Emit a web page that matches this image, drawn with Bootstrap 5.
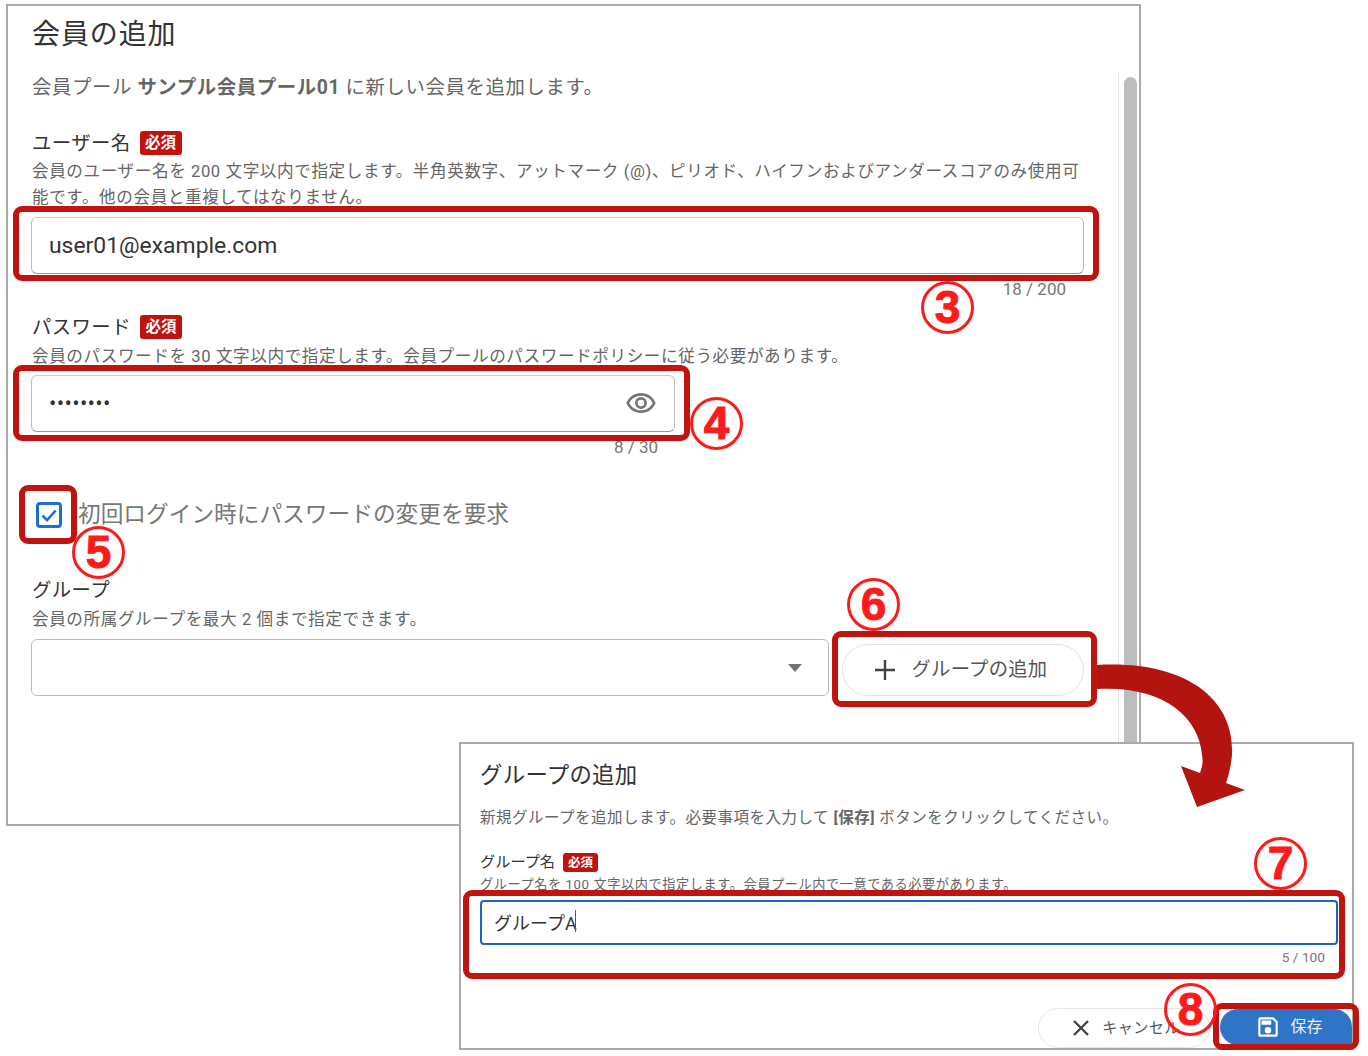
<!DOCTYPE html>
<html lang="ja">
<head>
<meta charset="utf-8">
<title>会員の追加</title>
<link href="https://cdn.jsdelivr.net/npm/bootstrap@5.3.0/dist/css/bootstrap.min.css" rel="stylesheet">
<style>
html,body{height:100%;}
body{margin:0;background:#fff;font-family:Roboto,"Noto Sans CJK JP",sans-serif;color:#666;overflow:hidden;}
.canvas{position:relative;width:1368px;height:1056px;overflow:hidden;}
.win{position:absolute;background:#fff;border:2px solid #aaa;overflow:hidden;}
.win-a{left:6px;top:4px;width:1135px;height:822px;padding:0 54px 0 24px;}
.win-b{left:459px;top:742px;width:895px;height:308px;padding:0 14px 0 19px;}
.scroll-track{position:absolute;left:1110px;top:66px;bottom:0;width:23px;background:#fff;border-left:1px solid #e2e2e2;}
.scroll-thumb{position:absolute;left:5px;top:5px;bottom:0;width:13px;background:#bdbdbd;border-radius:7px 7px 0 0;}
.title-a{margin:10px 0 0;height:38px;line-height:38px;font-size:28px;font-weight:400;color:#333;letter-spacing:.9px;}
.intro{margin:20px 0 0;height:28px;line-height:28px;font-size:19.4px;letter-spacing:.6px;}
.intro b,.intro-b b{font-weight:700;color:#666;}
.lbl{display:flex;align-items:center;gap:9px;height:26px;color:#333;font-size:19.4px;line-height:26px;letter-spacing:.4px;}
.lbl-first{margin-top:29px;}
.req{background:#c1120e;color:#fff;font-size:15.5px;font-weight:700;border-radius:3px;padding:0 5.5px;height:24px;line-height:24px;letter-spacing:0;margin-bottom:2px;}
.hint{font-size:16.6px;line-height:26px;margin:0;letter-spacing:.59px;}
.field{display:block;width:100%;height:57px;border:1px solid #bbb;border-bottom-color:#999;border-top-color:#ccc;border-radius:6px;padding:0 17px;font-size:22.9px;color:#333;box-shadow:none;}
.cnt{font-size:17px;line-height:18px;color:#777;text-align:right;}
.pw-wrap{position:relative;width:644px;margin-left:-1px;}
.pw-field{font-size:22px;letter-spacing:.3px;}
.pw-eye{position:absolute;right:18px;top:12px;width:32px;height:32px;}
.chk-row{display:flex;align-items:center;gap:16px;height:30px;margin:44px 0 0 4px;font-size:22.7px;color:#777;}
.chk-box{flex:none;width:26px;height:26px;margin:0;}
.sel-row{display:flex;gap:13px;align-items:flex-end;margin:6px 1px 0 -1px;}
.sel{position:relative;flex:1;height:57px;border:1px solid #bbb;border-radius:6px;}
.sel-arrow{position:absolute;right:26px;top:24px;width:0;height:0;border-left:7px solid transparent;border-right:7px solid transparent;border-top:8px solid #757575;}
.add-btn{display:flex;align-items:center;justify-content:center;gap:15px;width:242px;height:52px;padding:0 6px 0 0;border:1px solid #e2e2e2;border-radius:26px;background:#fff;color:#555;font-size:19.3px;letter-spacing:.3px;}
.title-b{margin:16px 0 0;height:30px;line-height:30px;font-size:22.4px;font-weight:400;color:#333;letter-spacing:.3px;}
.intro-b{margin:16px 0 0;height:24px;line-height:24px;font-size:15.5px;letter-spacing:.5px;}
.lbl-b{display:flex;align-items:center;gap:8px;height:20px;margin-top:22px;font-size:15.2px;color:#333;}
.req-b{background:#c1120e;color:#fff;font-size:12.5px;font-weight:700;border-radius:3px;padding:0 5px;height:19px;line-height:19px;}
.hint-b{font-size:13.2px;line-height:18px;margin:4px 0 0;letter-spacing:.57px;}
.focus-wrap{position:relative;margin-top:6px;}
.field-b{display:block;width:100%;height:45px;border:2px solid #1a66c0;border-radius:4px;padding:0 12px 2px;font-size:18px;color:#333;box-shadow:none;}
.caret-mark{position:absolute;left:95px;top:10px;width:1px;height:22px;background:#1a66c0;}
.cnt-b{font-size:13.7px;line-height:16px;color:#777;text-align:right;padding-right:13px;margin-top:4px;}
.foot{display:flex;justify-content:flex-end;gap:10px;margin-top:43px;margin-right:-14px;}
.cancel-btn,.save-btn{display:flex;align-items:center;justify-content:center;padding:0;}
.cancel-btn{gap:12px;width:172px;height:40px;padding-left:4px;border:1px solid #e6e6e6;border-radius:20px;background:#fff;color:#555;font-size:15.2px;letter-spacing:.3px;}
.save-btn{gap:9px;width:132px;height:36px;margin-top:1px;padding-left:6px;border:0;border-radius:18px 18px 0 18px;background:#3074c8;color:#e8f0fa;font-size:16px;}
.mark-box{position:absolute;border:6px solid #bf1410;border-radius:9px;pointer-events:none;}
.num{position:absolute;width:53px;height:53px;border:3px solid #ff1a1a;border-radius:50%;color:#ff1a1a;font:700 46px/47px "Liberation Sans",sans-serif;text-align:center;pointer-events:none;-webkit-text-stroke:1px #ff1a1a;}
.arrow-svg{position:absolute;left:0;top:0;pointer-events:none;}
</style>
</head>
<body>
<div class="canvas">

  <section class="win win-a">
    <h1 class="title-a">会員の追加</h1>
    <p class="intro">会員プール <b>サンプル会員プール01</b> に新しい会員を追加します。</p>

    <div class="lbl lbl-first"><span>ユーザー名</span><span class="req">必須</span></div>
    <p class="hint" style="margin-top:2px">会員のユーザー名を 200 文字以内で指定します。半角英数字、アットマーク (@)、ピリオド、ハイフンおよびアンダースコアのみ使用可能です。他の会員と重複してはなりません。</p>
    <input class="form-control field" style="margin:6px 0 0 -1px" type="text" value="user01@example.com">
    <div class="cnt" style="margin:6px 19px 0 0">18 / 200</div>

    <div class="lbl" style="margin-top:17px"><span>パスワード</span><span class="req">必須</span></div>
    <p class="hint" style="margin-top:3px">会員のパスワードを 30 文字以内で指定します。会員プールのパスワードポリシーに従う必要があります。</p>
    <div class="pw-wrap" style="margin-top:5px">
      <input class="form-control field pw-field" type="password" value="12345678">
      <svg class="pw-eye" viewBox="0 0 24 24" fill="#757575"><path d="M12 4.5C7 4.5 2.73 7.61 1 12c1.73 4.39 6 7.5 11 7.5s9.27-3.11 11-7.5c-1.73-4.39-6-7.5-11-7.5zm0 13c-3.79 0-7.17-2.13-8.82-5.5C4.83 8.63 8.21 6.5 12 6.5s7.17 2.13 8.82 5.5c-1.65 3.37-5.03 5.5-8.82 5.5zm0-10a4.5 4.5 0 1 0 0 9 4.5 4.5 0 0 0 0-9zm0 7a2.5 2.5 0 1 1 0-5 2.5 2.5 0 0 1 0 5z"/></svg>
    </div>
    <div class="cnt" style="width:626px;margin-top:6px">8 / 30</div>

    <div class="chk-row">
      <svg class="chk-box" viewBox="0 0 26 26" role="img" aria-label="チェック済み"><rect x="1.5" y="1.5" width="23" height="23" rx="2.5" fill="#fff" stroke="#1a6fd0" stroke-width="3"/><path d="M6.5 13.5l4.6 4.6 8.6-9.6" fill="none" stroke="#1a6fd0" stroke-width="2.6"/></svg>
      <span>初回ログイン時にパスワードの変更を要求</span>
    </div>

    <div class="lbl" style="margin-top:48px"><span>グループ</span></div>
    <p class="hint" style="margin-top:3px">会員の所属グループを最大 2 個まで指定できます。</p>
    <div class="sel-row">
      <div class="sel"><span class="sel-arrow"></span></div>
      <button type="button" class="btn add-btn">
        <svg width="24" height="24" viewBox="0 0 24 24" fill="none" stroke="#444" stroke-width="2.4"><path d="M12 2v20M2 12h20"/></svg>
        <span>グループの追加</span>
      </button>
    </div>
    <div class="scroll-track"><div class="scroll-thumb"></div></div>
  </section>

  <section class="win win-b">
    <h2 class="title-b">グループの追加</h2>
    <p class="intro-b">新規グループを追加します。必要事項を入力して <b>[保存]</b> ボタンをクリックしてください。</p>
    <div class="lbl-b"><span>グループ名</span><span class="req-b">必須</span></div>
    <p class="hint-b">グループ名を 100 文字以内で指定します。会員プール内で一意である必要があります。</p>
    <div class="focus-wrap">
      <input class="form-control field-b" type="text" value="グループA">
      <span class="caret-mark"></span>
    </div>
    <div class="cnt-b">5 / 100</div>
    <div class="foot">
      <button type="button" class="btn cancel-btn">
        <svg width="18" height="18" viewBox="0 0 18 18" fill="none" stroke="#444" stroke-width="2.4"><path d="M2 2l14 14M16 2L2 16"/></svg>
        <span>キャンセル</span>
      </button>
      <button type="button" class="btn save-btn">
        <svg width="26" height="26" viewBox="0 0 24 24" fill="#fff"><path d="M17 3H5a2 2 0 0 0-2 2v14a2 2 0 0 0 2 2h14a2 2 0 0 0 2-2V7l-4-4zm2 16H5V5h11.17L19 7.83V19zM12 12a3 3 0 1 0 0 6 3 3 0 0 0 0-6zM6 6h9v4H6V6z"/></svg>
        <span>保存</span>
      </button>
    </div>
  </section>

  <svg class="arrow-svg" width="1368" height="1056" viewBox="0 0 1368 1056"><path fill="#b31410" d="M1097 665C1180 660 1235 695 1232 755C1231 765 1229 775 1226 783L1245 790L1197 807L1181 766L1200 773C1203 765 1203 760 1202 755C1199 715 1160 685 1097 689Z"/></svg>

  <div class="mark-box" style="left:13px;top:206px;width:1086px;height:75px"></div>
  <div class="mark-box" style="left:13px;top:365px;width:677px;height:76px"></div>
  <div class="mark-box" style="left:19px;top:485px;width:58px;height:59px"></div>
  <div class="mark-box" style="left:832px;top:631px;width:265px;height:76px"></div>
  <div class="mark-box" style="left:463px;top:890px;width:882px;height:89px"></div>
  <div class="mark-box" style="left:1213px;top:1003px;width:146px;height:47px"></div>

  <div class="num" style="left:921px;top:281px">3</div>
  <div class="num" style="left:690px;top:397px">4</div>
  <div class="num" style="left:72px;top:526px">5</div>
  <div class="num" style="left:847px;top:578px">6</div>
  <div class="num" style="left:1254px;top:837px">7</div>
  <div class="num" style="left:1164px;top:983px">8</div>
</div>
<script src="https://cdn.jsdelivr.net/npm/bootstrap@5.3.0/dist/js/bootstrap.bundle.min.js"></script>
</body>
</html>
